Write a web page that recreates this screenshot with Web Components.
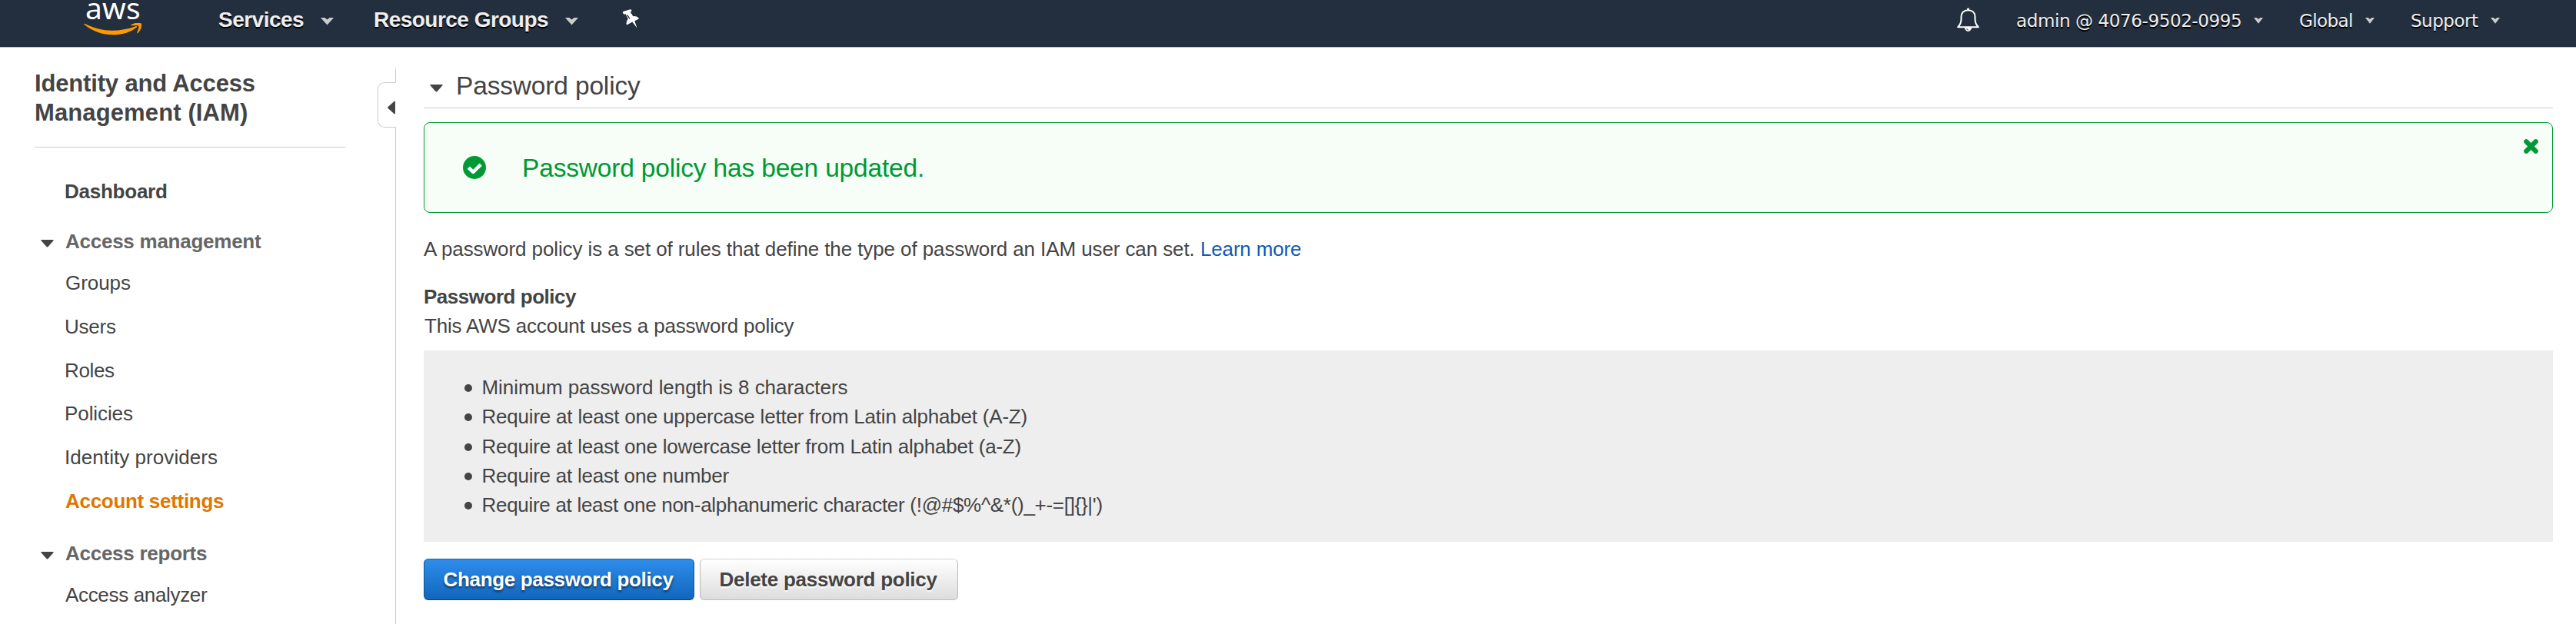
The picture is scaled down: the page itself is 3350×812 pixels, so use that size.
<!DOCTYPE html>
<html lang="en">
<head>
<meta charset="utf-8">
<title>IAM - Account settings</title>
<style>
html,body{margin:0;height:100%;background:#fff;overflow:hidden}
body{font:26px "Liberation Sans",Arial,sans-serif;color:#444}
</style>
</head>
<body>
<iam-app></iam-app>
<script>
function component(name, html) {
  customElements.define(name, class extends HTMLElement {
    constructor() {
      super();
      this.attachShadow({mode: 'open'}).innerHTML = html;
    }
  });
}

component('iam-app', `
<style>
:host{display:flex;flex-direction:column;height:812px;width:3350px}
.body{display:flex;flex:1;min-height:0}
</style>
<top-nav></top-nav>
<div class="body"><side-bar></side-bar><policy-page></policy-page></div>`);

component('top-nav', `
<style>
:host{display:flex;height:61px;background:#232f3e;border-bottom:1px solid #b9bcc2;color:#eee;text-shadow:0 2px 0 #000;flex:none}
aws-logo{margin-left:109px}
.m{font-weight:bold;font-size:28px;line-height:51px}
.u{font-family:"DejaVu Sans",sans-serif;font-size:23px;line-height:54px}
svg{display:block;flex:none}
.c{margin-top:23px}
.space{flex:1}
</style>
<aws-logo></aws-logo>
<fit-label class="m" w="111" style="margin-left:100px">Services</fit-label>
<menu-caret class="c" style="margin-left:22px"></menu-caret>
<fit-label class="m" w="226" style="margin-left:53px">Resource Groups</fit-label>
<menu-caret class="c" style="margin-left:22px"></menu-caret>
<svg style="margin:12px 0 0 57px" width="24" height="26" viewBox="0 0 24 26"><path fill="#fff" d="M1.2 5.2Q.3 3.6 2 2.8L9.8.4Q12-.1 12.4 1.5Q12.6 3.2 10.6 3.6L14.4 9.2Q18.5 8.6 21.4 11.2Q22.3 12.4 20.9 13.1L16.3 15.3L19.5 24.6L13.3 16.6L7.1 20.1Q5.5 20.5 5.5 18.6Q5.5 15.3 7.8 12.6L4.5 6.3Q2 7 1.2 5.2Z"/><path d="M6.5 7.3L10 12.3" stroke="#232f3e" stroke-width="1.3"/></svg>
<span class="space"></span>
<svg style="margin:10px 49px 0 0" width="29" height="32" viewBox="0 0 29 32" fill="none" stroke="#fff" stroke-width="2" stroke-linejoin="round"><circle cx="14.5" cy="2" r="1.2" fill="#fff" stroke-width="1"/><path d="M1.2 25.3C3.5 23 5.5 20 5.5 14.8V12C5.5 6.5 9 3.3 14.5 3.3S23.5 6.5 23.5 12V14.8C23.5 20 25.500 23 27.800 25.300Z"/><path d="M10.500 26.300C10.700 29 12.300 30.400 14.500 30.400S18.300 29 18.500 26.300Z" fill="#fff" stroke-width="1"/><path d="M12.700 27.200Q13 29 14.800 29.200" stroke="#232f3e" stroke-width="1"/></svg>
<fit-label class="u" w="291">admin @ 4076-9502-0995</fit-label>
<menu-caret class="c" small style="margin-left:17px"></menu-caret>
<fit-label class="u" w="68" style="margin-left:48px">Global</fit-label>
<menu-caret class="c" small style="margin-left:17px"></menu-caret>
<fit-label class="u" w="87" style="margin-left:48px">Support</fit-label>
<menu-caret class="c" small style="margin:23px 99px 0 16px"></menu-caret>`);

component('aws-logo', `
<style>
:host{display:block;width:75px;height:61px;flex:none;text-shadow:none;color:#fff;font:39px "Noto Sans",sans-serif;line-height:20px}
.w{height:30px;margin-left:3px;line-height:20px}
svg{display:block}
</style>
<fit-label class="w" w="69">aws</fit-label>
<svg width="76" height="17" viewBox="0 0 76 17"><path fill="#f90" d="M.4 1.800Q-.2 0 1.800 1C22 11.800 45 12.200 67.400 4.200Q70.200 3.600 68.400 5.900C52 18.500 21 19.600.4 1.800Z"/><path fill="#f90" d="M61.300 2.500C65-.4 72-.9 74.600.5C76.200 3.500 73.700 10.300 70.200 13Q68.700 13.800 69.200 12.200C70.500 9 72 5 71.300 3.800C70.300 2.400 66 2.900 62.600 3.300Q60.300 3.500 61.300 2.500Z"/></svg>`);

component('menu-caret', `
<style>
:host{display:block;width:17px;height:10px;flex:none}
:host([small]){width:12px;height:8px}
svg{display:block;width:100%;height:100%}
</style>
<svg viewBox="0 0 17 10" preserveAspectRatio="none"><path fill="#ccc" d="M0 0H5.300L8.500 2.600L11.700 0H17L8.500 9.600Z"/></svg>`);

component('disclosure-arrow', `
<style>:host{display:block;width:17px;height:10px;flex:none}svg{display:block}</style>
<svg width="17" height="10" viewBox="0 0 17 10"><path fill="#444" d="M1 0H16Q17.300.3 16.400 1.300L10 8.500Q8.500 10.300 7 8.500L.6 1.300Q-.3.3 1 0Z"/></svg>`);

component('side-bar', `
<style>
:host{display:flex;width:515px;flex:none}
nav{width:404px;padding:28px 0 0 45px;flex:none}
.title{font-size:31px;font-weight:bold;line-height:38px;padding-left:2px;display:flex;flex-direction:column;height:101px;border-bottom:1px solid #ccc;margin-bottom:37px}
.rail{margin:27px 0 0 auto;width:24px;display:flex;flex-direction:column;box-sizing:border-box}
.a{height:18px;border-right:1px solid #ccc}
.tab{height:57px;border:1px solid #ccc;border-right:0;border-radius:9px 0 0 9px;display:flex;align-items:center;justify-content:flex-end;padding:0 1px 0 0;margin:0}
.b{flex:1;border-right:1px solid #ccc}
svg{display:block;margin-top:6px}
</style>
<nav>
<div class="title"><fit-label w="285">Identity and Access</fit-label><fit-label w="274">Management (IAM)</fit-label></div>
<nav-heading plain><fit-label w="132">Dashboard</fit-label></nav-heading>
<nav-heading style="margin-top:25px"><fit-label w="255">Access management</fit-label></nav-heading>
<nav-link style="margin-top:5px"><fit-label w="84">Groups</fit-label></nav-link>
<nav-link><fit-label w="65">Users</fit-label></nav-link>
<nav-link><fit-label w="63">Roles</fit-label></nav-link>
<nav-link style="line-height:56px"><fit-label w="87">Policies</fit-label></nav-link>
<nav-link style="line-height:56px"><fit-label w="197">Identity providers</fit-label></nav-link>
<nav-link active><fit-label w="206">Account settings</fit-label></nav-link>
<nav-heading style="margin-top:19px"><fit-label w="184">Access reports</fit-label></nav-heading>
<nav-link style="margin:5px 0 0 -1px"><fit-label w="185">Access analyzer</fit-label></nav-link>
</nav>
<div class="rail"><div class="a"></div><div class="tab"><svg width="10" height="18" viewBox="0 0 10 18"><path fill="#444" d="M10 .5V17.500L8.500 17L.6 10Q-.4 9 .6 8L8.500 1Z"/></svg></div><div class="b"></div></div>`);

component('nav-heading', `
<style>
:host{display:flex;height:40px;line-height:40px;font-weight:bold;color:#666;padding-left:8px}
:host([plain]){color:#444}
disclosure-arrow{margin:18px 15px 0 0}
:host([plain]) disclosure-arrow{visibility:hidden}
</style>
<disclosure-arrow></disclosure-arrow><slot></slot>`);

component('nav-link', `
<style>
:host{display:block;height:57px;line-height:58px;padding-left:41px}
:host([active]){color:#e07700;font-weight:bold;padding-left:40px;line-height:57px}
</style><slot></slot>`);

component('policy-page', `
<style>
:host{display:block;flex:1;padding:28px 30px 0 36px}
.head{display:flex;height:50px;border-bottom:1px solid #ccc;font-size:33.500px;line-height:43px;padding-left:8px}
.head disclosure-arrow{margin:20px 19px 0 0}
.intro{margin-top:28px;display:flex;line-height:38px}
a{color:#1058b8;text-decoration:none;margin-left:10px}
.lines{display:flex;flex-direction:column;line-height:38px;margin-top:24px;padding-left:1px}
b{display:block}
.rules{background:#eee;height:249px;box-sizing:border-box;padding:29px 0 0 53px;margin-top:13px;font-size:26px}
.actions{display:flex;gap:7px;margin-top:22px}
</style>
<div class="head"><disclosure-arrow></disclosure-arrow><fit-label w="238">Password policy</fit-label></div>
<status-alert><fit-label w="519">Password policy has been updated.</fit-label></status-alert>
<div class="intro"><fit-label w="1002">A password policy is a set of rules that define the type of password an IAM user can set.</fit-label><a><fit-label w="129">Learn more</fit-label></a></div>
<div class="lines"><b><fit-label w="198">Password policy</fit-label></b><fit-label w="482">This AWS account uses a password policy</fit-label></div>
<div class="rules">
<rule-item><fit-label w="474">Minimum password length is 8 characters</fit-label></rule-item>
<rule-item><fit-label w="707">Require at least one uppercase letter from Latin alphabet (A-Z)</fit-label></rule-item>
<rule-item><fit-label w="699">Require at least one lowercase letter from Latin alphabet (a-Z)</fit-label></rule-item>
<rule-item><fit-label w="320">Require at least one number</fit-label></rule-item>
<rule-item><fit-label w="805">Require at least one non-alphanumeric character (!@#$%^&amp;*()_+-=[]{}|')</fit-label></rule-item>
</div>
<div class="actions"><aws-button primary style="width:352px"><fit-label w="299">Change password policy</fit-label></aws-button><aws-button style="width:336px"><fit-label w="283">Delete password policy</fit-label></aws-button></div>`);

component('status-alert', `
<style>
:host{display:flex;box-sizing:border-box;height:118px;margin-top:18px;border:1px solid #093;border-radius:8px;background:#f6fef7;color:#093;font-size:33.500px;line-height:116px;padding-left:50px}
svg{display:block;flex:none}
.x{margin:21px 18px 0 auto}
.ok{margin:43px 49px 0 0}
.t{margin-top:1px}
</style>
<svg class="ok" width="30" height="30" viewBox="0 0 30 30"><circle cx="15" cy="15" r="15" fill="#093"/><path d="M7.400 15.200L13.300 20.900L23.200 11.200" fill="none" stroke="#fff" stroke-width="4.600" stroke-linejoin="round" stroke-linecap="butt"/></svg>
<div class="t"><slot></slot></div>
<svg class="x" width="19" height="19" viewBox="0 0 19 19"><path d="M3.300 3.300L15.700 15.700M15.700 3.300L3.300 15.700" stroke="#093" stroke-width="6.200" stroke-linecap="round"/></svg>`);

component('rule-item', `
<style>
:host{display:flex;height:38.300px;line-height:38px}
i{width:10px;height:10px;border-radius:50%;background:#444;margin:15px 14.500px 0 0;flex:none}
</style><i></i><slot></slot>`);

component('aws-button', `
<style>
:host{display:flex;justify-content:center;box-sizing:border-box;height:54px;border:1px solid #bbb;border-top-color:#d5d5d5;border-radius:6px;background:linear-gradient(#fff,#ddd);font-weight:bold;line-height:52px;text-shadow:0 2px 2px #fff}
:host([primary]){color:#fff;background:linear-gradient(#2e8ded,#1166bb);border-color:#1462b0 #0e4f93 #0a3f78;text-shadow:0 2px 3px rgba(0,0,0,.6)}
</style><slot></slot>`);

/* A single-line label whose visible glyphs span exactly the width in its w attribute. */
customElements.define('fit-label', class extends HTMLElement {
  connectedCallback() {
    const root = this.shadowRoot || this.attachShadow({mode: 'open'});
    root.innerHTML = '<style>:host{display:block;flex:none;white-space:nowrap}span{display:inline-block}</style><span><slot></slot></span>';
    const w = +this.getAttribute('w'), s = getComputedStyle(this), text = this.textContent;
    const ctx = document.createElement('canvas').getContext('2d');
    ctx.font = `${s.fontWeight} ${s.fontSize} ${s.fontFamily}`;
    const m = ctx.measureText(text);
    const ink = m.actualBoundingBoxLeft + m.actualBoundingBoxRight;
    const span = root.querySelector('span');
    this.style.width = w + 'px';
    span.style.marginLeft = m.actualBoundingBoxLeft + 'px';
    span.style.letterSpacing = (w - ink) / (text.length - 1) + 'px';
  }
});
</script>
</body>
</html>
